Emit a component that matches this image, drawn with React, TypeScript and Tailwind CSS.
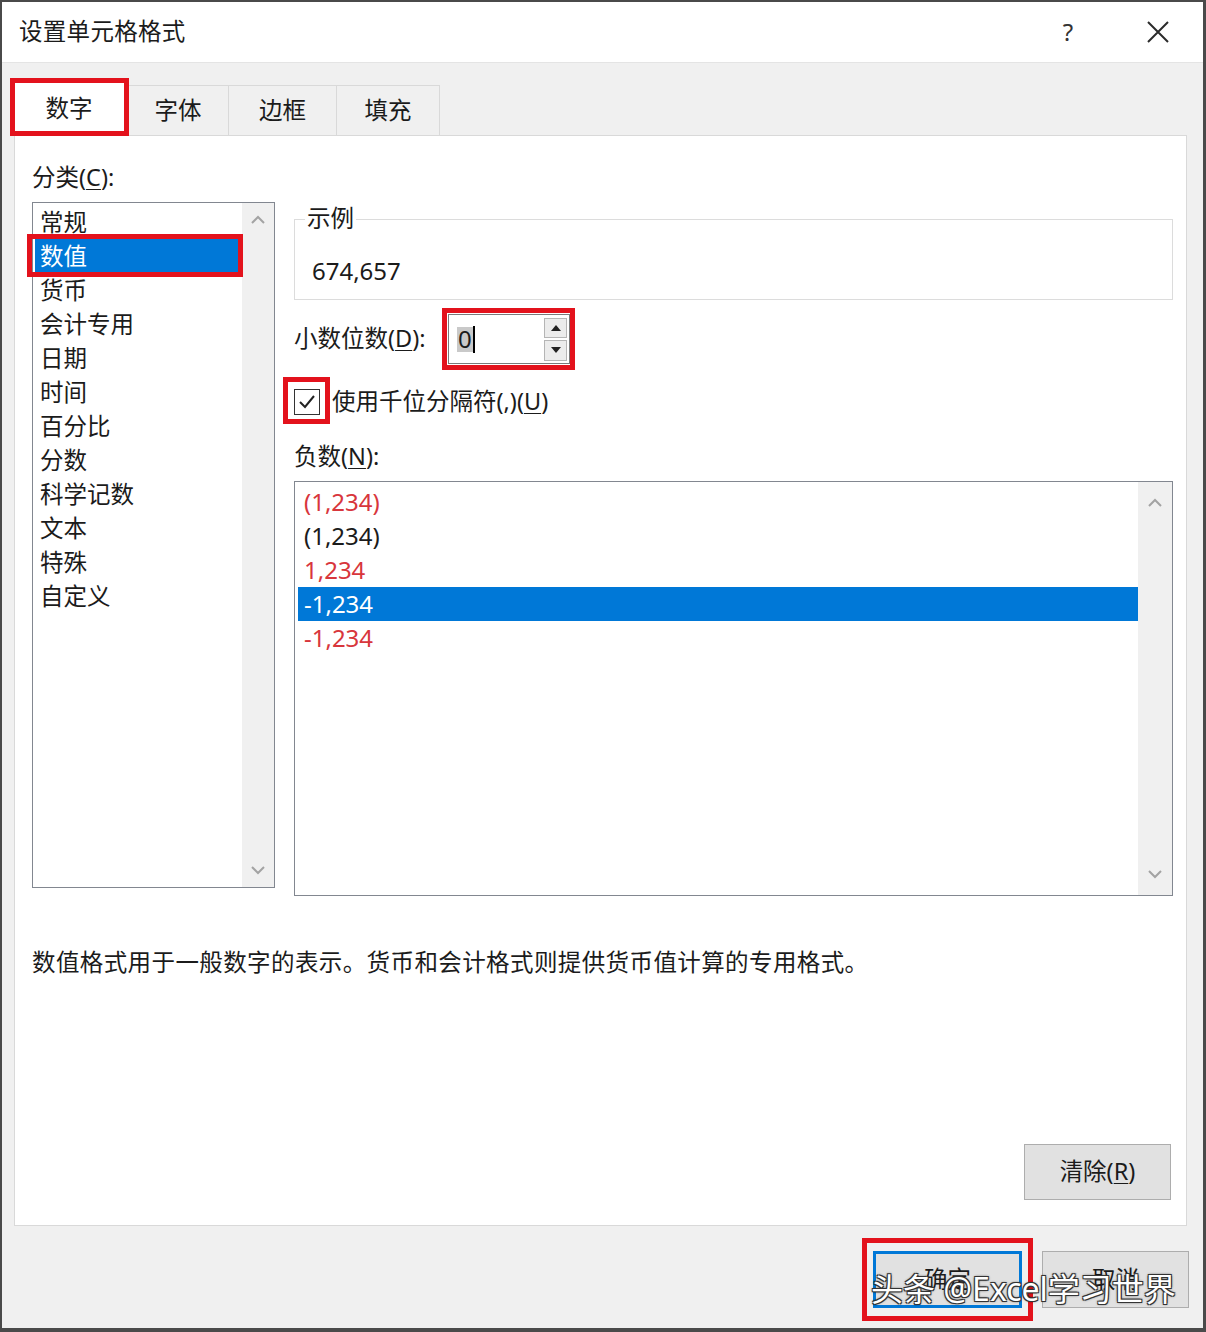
import React from "react";

const F = "font-['Noto_Sans','Noto_Sans_CJK_SC',sans-serif]";

const categories = ["常规", "数值", "货币", "会计专用", "日期", "时间", "百分比", "分数", "科学记数", "文本", "特殊", "自定义"];

const negatives = [
  { text: "(1,234)", red: true },
  { text: "(1,234)", red: false },
  { text: "1,234", red: true },
  { text: "-1,234", red: false, selected: true },
  { text: "-1,234", red: true },
];

function Chevron({ up }: { up?: boolean }) {
  return (
    <svg width="16" height="10" viewBox="0 0 16 10" className="block">
      <polyline
        points={up ? "2,8 8,2 14,8" : "2,2 8,8 14,2"}
        fill="none"
        stroke="#a3a3a3"
        strokeWidth="2"
      />
    </svg>
  );
}

function Scrollbar({ className }: { className: string }) {
  return (
    <div className={`flex flex-col items-center justify-between bg-[#f0f0f0] ${className}`}>
      <Chevron up />
      <Chevron />
    </div>
  );
}

function Key({ k }: { k: string }) {
  return <span className="underline underline-offset-[3px] decoration-1">{k}</span>;
}

export default function App() {
  return (
    <div
      className={`relative flex h-[1332px] w-[1206px] flex-col overflow-hidden border-t-2 border-r-[3px] border-b-4 border-l-2 border-[#4a4a4a] bg-[#f0f0f0] text-[23.5px] text-[#1b1b1b] ${F}`}
    >
      {/* title bar */}
      <div className="flex h-[61px] shrink-0 items-center border-b border-[#e4e4e4] bg-white pl-[17px] pr-[33px]">
        <span className="leading-none tracking-[0.3px]">设置单元格格式</span>
        <div className="ml-auto flex items-center gap-[68px]">
          <span className="w-[20px] text-center text-[24px] leading-none text-[#333]">?</span>
          <svg width="24" height="24" viewBox="0 0 24 24">
            <path d="M2 2 L22 22 M22 2 L2 22" stroke="#2b2b2b" strokeWidth="2" />
          </svg>
        </div>
      </div>

      {/* body */}
      <div className="flex flex-1 flex-col pl-[12px]">
        {/* tabs */}
        <div className="mt-[17px] flex h-[55px] items-end">
          <div className="relative z-10 -mb-px flex h-[56px] w-[114px] items-center justify-center border border-b-0 border-[#d9d9d9] bg-white pr-[4px]">
            数字
          </div>
          <div className="flex h-[50px] w-[101px] items-center justify-center border border-l-0 border-b-0 border-[#d9d9d9] bg-[#f0f0f0]">
            字体
          </div>
          <div className="flex h-[50px] w-[108px] items-center justify-center border border-l-0 border-b-0 border-[#d9d9d9] bg-[#f0f0f0]">
            边框
          </div>
          <div className="flex h-[50px] w-[103px] items-center justify-center border border-l-0 border-b-0 border-[#d9d9d9] bg-[#f0f0f0]">
            填充
          </div>
        </div>

        {/* panel */}
        <div className="flex h-[1091px] w-[1173px] flex-col border border-[#d9d9d9] bg-white pl-[17px] pt-[26px]">
          <div className="h-[30px] leading-[30px]">
            分类(<Key k="C" />):
          </div>
          <div className="mt-[10px] flex gap-[19px]">
            {/* category list */}
            <div className="flex h-[686px] w-[243px] border border-[#828790]">
              <div className="flex-1 pt-[2px]">
                {categories.map((c, i) =>
                  i === 1 ? (
                    <div key={c} className="ml-[2px] mr-[3px] h-[34px] bg-[#0078d7] pl-[5px] leading-[34px] text-white">
                      {c}
                    </div>
                  ) : (
                    <div key={c} className="ml-[2px] h-[34px] pl-[5px] leading-[34px]">
                      {c}
                    </div>
                  )
                )}
              </div>
              <Scrollbar className="w-[32px] py-[12px]" />
            </div>

            {/* right column */}
            <div className="flex w-[879px] flex-col">
              <div className="relative mt-[17px] h-[81px] border border-[#dcdcdc]">
                <span className="absolute -top-[17px] left-[10px] bg-white px-[2px] leading-[30px]">示例</span>
                <div className="pl-[17px] pt-[36px] text-[24px] leading-[30px]">674,657</div>
              </div>

              <div className="mt-[14px] flex h-[50px] items-center">
                <span className="w-[154px]">
                  小数位数(<Key k="D" />):
                </span>
                <div className="flex h-[50px] w-[122px] items-center border border-[#7a7a7a] bg-white pl-[8px] pr-[2px]">
                  <span className="flex h-[25px] items-center bg-[#c9c9c9] px-[1px] text-[24px] leading-none">0</span>
                  <span className="h-[27px] w-[2px] bg-black" />
                  <div className="ml-auto flex h-[43px] w-[23px] flex-col gap-[2px]">
                    <div className="flex flex-1 items-center justify-center border border-[#b5b5b5] bg-[#ececec]">
                      <svg width="10" height="6" viewBox="0 0 10 6">
                        <polygon points="0,6 5,0 10,6" fill="#222" />
                      </svg>
                    </div>
                    <div className="flex flex-1 items-center justify-center border border-[#b5b5b5] bg-[#ececec]">
                      <svg width="10" height="6" viewBox="0 0 10 6">
                        <polygon points="0,0 10,0 5,6" fill="#222" />
                      </svg>
                    </div>
                  </div>
                </div>
              </div>

              <div className="mt-[25px] flex h-[26px] items-center">
                <div className="flex h-[26px] w-[26px] items-center justify-center border border-[#333] bg-white">
                  <svg width="20" height="20" viewBox="0 0 20 20">
                    <polyline points="3,10 8,15 17,4" fill="none" stroke="#222" strokeWidth="2" />
                  </svg>
                </div>
                <span className="ml-[12px]">
                  使用千位分隔符(,)(<Key k="U" />)
                </span>
              </div>

              <div className="mt-[26px] h-[30px] leading-[30px]">
                负数(<Key k="N" />):
              </div>

              {/* negative list */}
              <div className="mt-[10px] flex h-[415px] w-[879px] border border-[#828790]">
                <div className="flex-1 pt-[3px]">
                  {negatives.map((n, i) => (
                    <div
                      key={i}
                      className={
                        n.selected
                          ? "ml-[3px] h-[34px] bg-[#0078d7] pl-[6px] text-[24px] leading-[34px] text-white"
                          : n.red
                          ? "ml-[3px] h-[34px] pl-[6px] text-[24px] leading-[34px] text-[#d8363c]"
                          : "ml-[3px] h-[34px] pl-[6px] text-[24px] leading-[34px]"
                      }
                    >
                      {n.text}
                    </div>
                  ))}
                </div>
                <Scrollbar className="w-[34px] py-[16px]" />
              </div>
            </div>
          </div>

          <div className="mt-[51px] h-[30px] leading-[30px] tracking-[0.4px]">
            数值格式用于一般数字的表示。货币和会计格式则提供货币值计算的专用格式。
          </div>

          <div className="mt-auto mb-[25px] mr-[15px] flex justify-end">
            <div className="flex h-[56px] w-[147px] items-center justify-center border border-[#adadad] bg-[#e1e1e1]">
              清除(<Key k="R" />)
            </div>
          </div>
        </div>

        {/* bottom buttons */}
        <div className="flex flex-1 items-start justify-end gap-[20px] pt-[25px] pr-[14px]">
          <div className="flex h-[57px] w-[149px] items-center justify-center border-[3px] border-[#0078d7] bg-[#e1e1e1]">
            确定
          </div>
          <div className="flex h-[57px] w-[147px] items-center justify-center border border-[#adadad] bg-[#e1e1e1]">
            取消
          </div>
        </div>
      </div>

      {/* annotations */}
      <div className="pointer-events-none absolute -left-[2px] -top-[2px] z-20 h-[1332px] w-[1206px]">
        <div className="absolute left-[10px] top-[78px] h-[58px] w-[119px] border-[5px] border-[#e3121c]" />
        <div className="absolute left-[27px] top-[234px] h-[43px] w-[216px] border-[5px] border-[#e3121c]" />
        <div className="absolute left-[442px] top-[308px] h-[62px] w-[133px] border-[5px] border-[#e3121c]" />
        <div className="absolute left-[283px] top-[377px] h-[47px] w-[47px] border-[5px] border-[#e3121c]" />
        <div className="absolute left-[862px] top-[1238px] h-[83px] w-[171px] border-[5px] border-[#e3121c]" />
        <div className="absolute left-[871px] top-[1267px] whitespace-nowrap text-[32px] leading-[44px] text-white [text-shadow:-1px_-1px_0_#333,1px_-1px_0_#333,-1px_1px_0_#333,1px_1px_0_#333,0_0_3px_#000]">
          头条 @Excel学习世界
        </div>
      </div>
    </div>
  );
}
